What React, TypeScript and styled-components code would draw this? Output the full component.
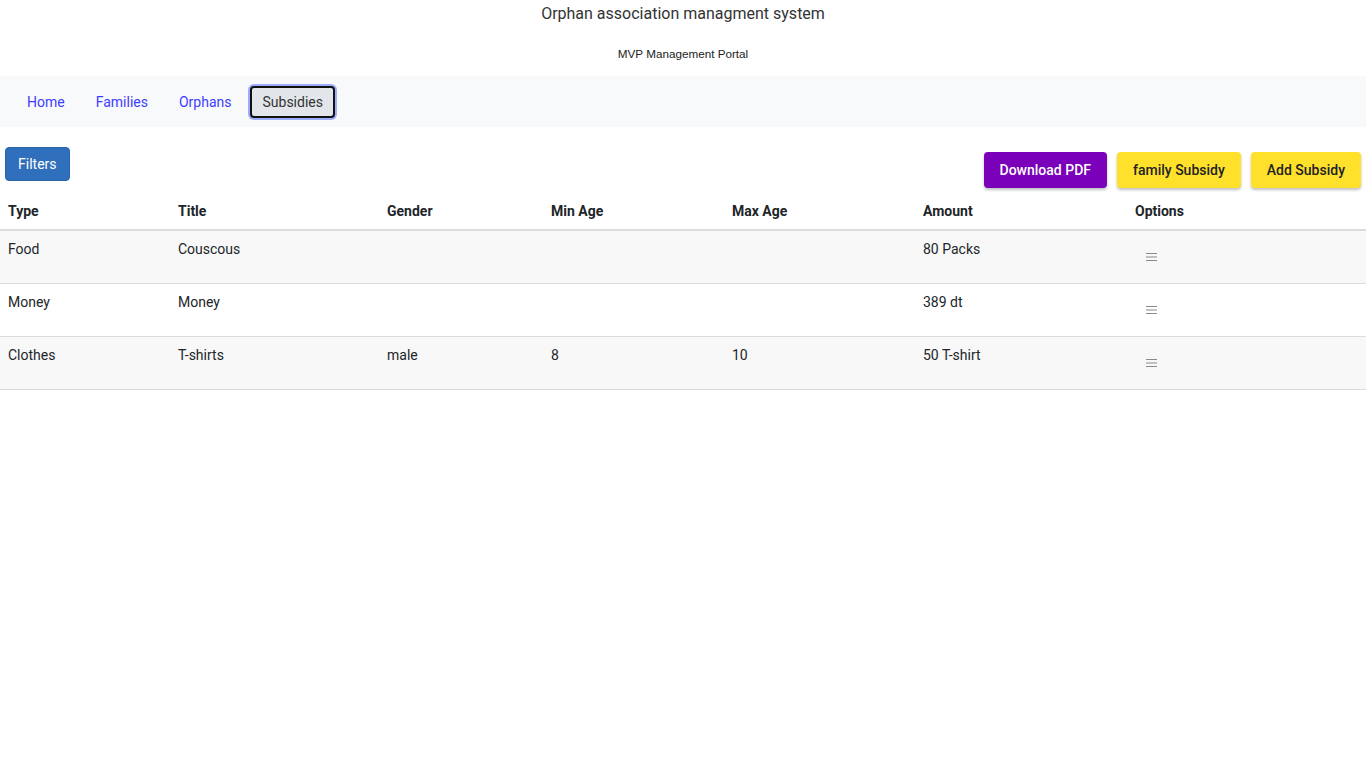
import styled, { createGlobalStyle } from "styled-components";

const GlobalStyle = createGlobalStyle`
  html, body {
    margin: 0;
    padding: 0;
    background: #ffffff;
    font-family: Roboto, "Noto Sans", sans-serif;
    color: #212529;
  }
`;

type Subsidy = {
  type: string;
  title: string;
  gender: string;
  minAge: string;
  maxAge: string;
  amount: string;
};

const subsidies: Subsidy[] = [
  { type: "Food", title: "Couscous", gender: "", minAge: "", maxAge: "", amount: "80 Packs" },
  { type: "Money", title: "Money", gender: "", minAge: "", maxAge: "", amount: "389 dt" },
  { type: "Clothes", title: "T-shirts", gender: "male", minAge: "8", maxAge: "10", amount: "50 T-shirt" },
];

const columns = [
  { label: "Type", width: 170 },
  { label: "Title", width: 209 },
  { label: "Gender", width: 164 },
  { label: "Min Age", width: 181 },
  { label: "Max Age", width: 191 },
  { label: "Amount", width: 212 },
  { label: "Options", width: 239 },
];

const MenuIcon = () => (
  <svg width="11" height="10" viewBox="0 0 11 10" fill="none">
    <path d="M0 1.5h11M0 5h11M0 8.5h11" stroke="#8a8a8a" strokeWidth="1.2" />
  </svg>
);

const App = () => {
  return (
    <>
      <GlobalStyle />
      <Header>
        <AppTitle>Orphan association managment system</AppTitle>
        <SubTitle>MVP Management Portal</SubTitle>
      </Header>
      <NavBar>
        <NavLink>Home</NavLink>
        <NavLink>Families</NavLink>
        <NavLink>Orphans</NavLink>
        <ActiveTab>Subsidies</ActiveTab>
      </NavBar>
      <Toolbar>
        <FilterButton>Filters</FilterButton>
        <Actions>
          <ActionButton $variant="purple">Download PDF</ActionButton>
          <ActionButton $variant="yellow">family Subsidy</ActionButton>
          <ActionButton $variant="yellow">Add Subsidy</ActionButton>
        </Actions>
      </Toolbar>
      <Table>
        <colgroup>
          {columns.map((c) => (
            <col key={c.label} style={{ width: c.width }} />
          ))}
        </colgroup>
        <thead>
          <tr>
            {columns.map((c) => (
              <Th key={c.label}>{c.label}</Th>
            ))}
          </tr>
        </thead>
        <tbody>
          {subsidies.map((s, i) => (
            <Row key={i} $striped={i % 2 === 0}>
              <Td>{s.type}</Td>
              <Td>{s.title}</Td>
              <Td>{s.gender}</Td>
              <Td>{s.minAge}</Td>
              <Td>{s.maxAge}</Td>
              <Td>{s.amount}</Td>
              <Td>
                <IconButton aria-label="options">
                  <MenuIcon />
                </IconButton>
              </Td>
            </Row>
          ))}
        </tbody>
      </Table>
    </>
  );
};

const Header = styled.header`
  display: flex;
  flex-direction: column;
  align-items: center;
  height: 76px;
`;

const AppTitle = styled.h1`
  margin: 4px 0 0;
  font-size: 16px;
  font-weight: 400;
  line-height: 20px;
  color: #333;
`;

const SubTitle = styled.p`
  margin: 23px 0 0;
  font-family: "Liberation Sans", Arial, sans-serif;
  font-size: 11.7px;
  line-height: 14px;
  color: #222;
`;

const NavBar = styled.nav`
  display: flex;
  align-items: center;
  height: 51px;
  padding: 0 11px;
  background: #f8f9fa;
  box-sizing: border-box;
`;

const NavLink = styled.a`
  padding: 8px 16px;
  font-size: 14px;
  line-height: 20px;
  color: #3d3dff;
  cursor: pointer;

  & + & {
    padding-left: 15px;
  }
`;

const ActiveTab = styled.button`
  margin-left: 3px;
  height: 32px;
  padding: 0 10px;
  border: 2px solid #111;
  border-radius: 4px;
  background: #e2e6ea;
  box-shadow: 0 0 0 2px #9cacff;
  font-family: Roboto, sans-serif;
  font-size: 14px;
  color: #333;
`;

const Toolbar = styled.div`
  display: flex;
  justify-content: space-between;
  align-items: flex-start;
  padding: 20px 5px 0;
  height: 67px;
  box-sizing: border-box;
`;

const FilterButton = styled.button`
  height: 34px;
  padding: 0 12px;
  border: 1px solid #2a64ab;
  border-radius: 4px;
  background: #2f6fbc;
  color: #fff;
  font-family: Roboto, sans-serif;
  font-size: 14px;
`;

const Actions = styled.div`
  display: flex;
  gap: 10px;
  margin-top: 5px;
`;

const ActionButton = styled.button<{ $variant: "purple" | "yellow" }>`
  height: 36px;
  padding: 0 16px;
  border: none;
  border-radius: 4px;
  font-family: Roboto, sans-serif;
  font-size: 14px;
  font-weight: 500;
  background: ${(p) => (p.$variant === "purple" ? "#7a00b9" : "#ffe12c")};
  color: ${(p) => (p.$variant === "purple" ? "#fff" : "#222")};
  box-shadow: 0 2px 3px rgba(0, 0, 0, 0.25);
`;

const Table = styled.table`
  width: 100%;
  border-collapse: collapse;
  table-layout: fixed;
  font-size: 14px;
`;

const Th = styled.th`
  text-align: left;
  padding: 7px 8px 8px;
  font-weight: 700;
  line-height: 20px;
  color: #212529;
  border-bottom: 2px solid #dcdcdc;
`;

const Row = styled.tr<{ $striped: boolean }>`
  background: ${(p) => (p.$striped ? "#f8f8f8" : "#fff")};
  border-bottom: 1px solid #dcdcdc;
`;

const Td = styled.td`
  vertical-align: top;
  padding: 8px;
  line-height: 20px;
  color: #212529;
`;

const IconButton = styled.button`
  display: flex;
  align-items: center;
  justify-content: center;
  width: 33px;
  height: 36px;
  padding: 0;
  border: none;
  background: transparent;
`;

export default App;
